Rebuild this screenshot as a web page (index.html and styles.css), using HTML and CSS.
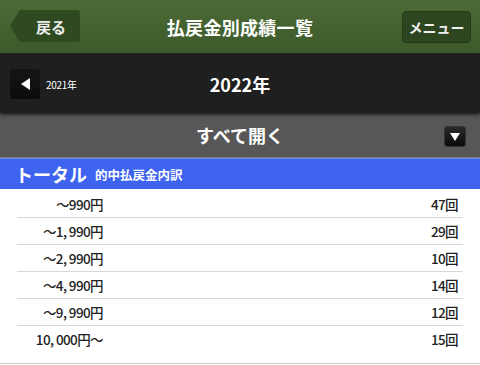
FILE: index.html
```html
<!DOCTYPE html>
<html lang="ja">
<head>
    <meta charset="UTF-8">
    <meta name="viewport" content="width=device-width, initial-scale=1.0">
    <title>払戻金別成績一覧</title>
    <link rel="stylesheet" href="styles.css">
</head>
<body>
    <div class="header">
        <a class="back-btn" href="#">戻る</a>
        <h1>払戻金別成績一覧</h1>
        <a class="menu-btn" href="#">メニュー</a>
    </div>

    <div class="year-bar">
        <a class="prev-btn" href="#"><span class="tri-left"></span></a>
        <span class="prev-year">2021年</span>
        <div class="year">2022年</div>
    </div>

    <div class="open-bar">
        <div class="open-text">すべて開く</div>
        <a class="open-btn" href="#"><span class="tri-down"></span></a>
    </div>

    <div class="section-title">
        <span class="big">トータル</span>
        <span class="small">的中払戻金内訳</span>
    </div>

    <div class="list">
        <div class="row"><span class="label">〜990円</span><span class="count">47回</span></div>
        <div class="row"><span class="label">〜1, 990円</span><span class="count">29回</span></div>
        <div class="row"><span class="label">〜2, 990円</span><span class="count">10回</span></div>
        <div class="row"><span class="label">〜4, 990円</span><span class="count">14回</span></div>
        <div class="row"><span class="label">〜9, 990円</span><span class="count">12回</span></div>
        <div class="row"><span class="label">10, 000円〜</span><span class="count">15回</span></div>
    </div>
</body>
</html>
```

FILE: styles.css
```css
body {
    margin: 0;
    font-family: "Noto Sans CJK JP", "Noto Sans", sans-serif;
    background-color: #ffffff;
    width: 480px;
}
a {
    text-decoration: none;
    color: #fff;
}
.header {
    height: 53px;
    background: linear-gradient(#4b6b36, #3d5a2a);
    border-bottom: 2px solid #222;
    display: flex;
    align-items: center;
    justify-content: center;
    position: relative;
}
.header h1 {
    margin: 0;
    color: #fff;
    font-size: 18px;
    font-weight: bold;
    letter-spacing: 0.3px;
}
.back-btn {
    position: absolute;
    left: 10px;
    top: 10px;
    width: 70px;
    height: 32px;
    background: #2f4a20;
    clip-path: polygon(10px 0, 100% 0, 100% 100%, 10px 100%, 0 50%);
    border-radius: 3px;
    color: #eee;
    font-size: 15px;
    font-weight: bold;
    display: flex;
    align-items: center;
    padding-left: 26px;
    box-sizing: border-box;
}
.menu-btn {
    position: absolute;
    right: 9px;
    top: 11px;
    width: 69px;
    height: 32px;
    background: #2d4620;
    border: 1px solid #25391a;
    border-radius: 4px;
    box-sizing: border-box;
    color: #eee;
    font-size: 14px;
    font-weight: bold;
    display: flex;
    align-items: center;
    justify-content: center;
}
.year-bar {
    height: 58px;
    background-color: #1f1f1f;
    display: flex;
    align-items: center;
    position: relative;
    box-shadow: 0 2px 3px rgba(0, 0, 0, 0.6);
    z-index: 1;
}
.prev-btn {
    width: 30px;
    height: 30px;
    margin-left: 10px;
    background: linear-gradient(#151515, #0c0c0c);
    border-radius: 3px;
    display: flex;
    align-items: center;
    justify-content: center;
}
.tri-left {
    width: 0;
    height: 0;
    border-top: 6px solid transparent;
    border-bottom: 6px solid transparent;
    border-right: 9px solid #fff;
}
.prev-year {
    color: #fff;
    font-size: 10px;
    margin-left: 6px;
    letter-spacing: -0.3px;
}
.year {
    position: absolute;
    left: 0;
    right: 0;
    top: 0;
    bottom: 0;
    display: flex;
    align-items: center;
    justify-content: center;
    color: #fff;
    font-size: 18px;
    font-weight: bold;
    pointer-events: none;
}
.open-bar {
    height: 44px;
    background-color: #575757;
    display: flex;
    align-items: center;
    justify-content: center;
    position: relative;
    border-bottom: 1px solid #777;
}
.open-text {
    color: #fff;
    font-size: 18px;
    font-weight: bold;
}
.open-btn {
    position: absolute;
    right: 14px;
    top: 13px;
    width: 20px;
    height: 19px;
    background: linear-gradient(#2a2a2a, #0a0a0a);
    border: 1px solid #333;
    border-radius: 3px;
    display: flex;
    align-items: center;
    justify-content: center;
}
.tri-down {
    width: 0;
    height: 0;
    border-left: 5px solid transparent;
    border-right: 5px solid transparent;
    border-top: 8px solid #fff;
}
.section-title {
    height: 30px;
    background-color: #3d63ef;
    border-top: 1px solid #6f8ff7;
    display: flex;
    align-items: center;
    padding-left: 15px;
    color: #fff;
}
.section-title .big {
    font-size: 18px;
    font-weight: bold;
}
.section-title .small {
    font-size: 12.5px;
    font-weight: bold;
    margin-left: 8px;
}
.list {
    padding-top: 2px;
    border-bottom: 1px solid #ccc;
    padding-bottom: 11px;
}
.row {
    margin: 0 17px;
    height: 26px;
    display: flex;
    align-items: center;
    justify-content: space-between;
    border-bottom: 1px solid #d8d8d8;
    color: #222;
    font-size: 13.5px;
    font-weight: 500;
}
.row:last-child {
    border-bottom: none;
}
.label {
    width: 86px;
    text-align: right;
    letter-spacing: -0.6px;
}
.count {
    margin-right: 5px;
    letter-spacing: -0.6px;
}
```
